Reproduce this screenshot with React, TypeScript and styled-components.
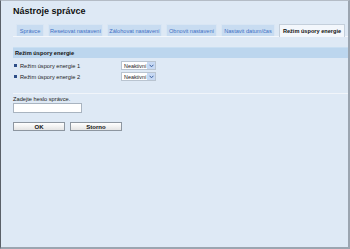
import React from "react";
import styled, { createGlobalStyle } from "styled-components";

const Global = createGlobalStyle`
  html, body { margin: 0; padding: 0; background: #dfe9f5; }
  body { font-family: "Liberation Sans", Arial, sans-serif; }
`;

const Frame = styled.div`
  box-sizing: border-box;
  width: 350px;
  height: 249px;
  background: #dee9f5;
  border-top: 1px solid #b4bcc6;
  border-left: 1px solid #5a6068;
  border-right: 2px solid #9ba5b0;
  border-bottom: 2px solid #9ba5b0;
  padding: 4px 0 0 12px;
  display: flex;
  flex-direction: column;
`;

const Title = styled.h1`
  margin: 0;
  font-size: 9px;
  line-height: 12px;
  font-weight: bold;
  color: #111;
`;

const TabBar = styled.div`
  margin-top: 7px;
  display: flex;
  gap: 4px;
  padding-left: 3px;
  border-bottom: 1px solid #f3f7fc;
  height: 12px;
`;

const Tab = styled.div<{ $w: number; $active?: boolean }>`
  box-sizing: border-box;
  width: ${(p) => p.$w}px;
  height: ${(p) => (p.$active ? 13 : 12)}px;
  display: flex;
  align-items: center;
  justify-content: center;
  font-size: 5.6px;
  white-space: nowrap;
  font-weight: ${(p) => (p.$active ? "bold" : "normal")};
  color: ${(p) => (p.$active ? "#111" : "#3f6fc4")};
  background: ${(p) => (p.$active ? "#f3f7fc" : "#c8dcf1")};
  border: 1px solid ${(p) => (p.$active ? "#c4cfdb" : "#d9e6f4")};
  border-bottom: none;
`;

const SectionBar = styled.div`
  margin-top: 10px;
  height: 11px;
  background: #bcd6ee;
  border-top: 1px solid #c9dff2;
  box-sizing: border-box;
  display: flex;
  align-items: center;
  padding-left: 2px;
  font-size: 5.7px;
  font-weight: bold;
  color: #111;
`;

const Rows = styled.div`
  margin-top: 2px;
  display: flex;
  flex-direction: column;
`;

const Row = styled.div`
  height: 11px;
  display: grid;
  grid-template-columns: 107px auto;
  align-items: center;
  padding-left: 1px;
`;

const Label = styled.div`
  display: flex;
  align-items: center;
  gap: 3px;
  font-size: 5.7px;
  color: #222;
  white-space: nowrap;
`;

const Bullet = styled.span`
  width: 3px;
  height: 3px;
  background: #2d4d86;
`;

const Select = styled.div`
  box-sizing: border-box;
  width: 35px;
  height: 9px;
  display: flex;
  align-items: center;
  background: #fff;
  border: 1px solid #b9c4d0;
  font-size: 5.4px;
  color: #222;
`;

const SelectText = styled.span`
  flex: 1;
  padding-left: 2px;
`;

const Arrow = styled.span`
  width: 8px;
  height: 7px;
  background: #c7d9f3;
  display: flex;
  align-items: center;
  justify-content: center;
`;

const Divider = styled.div`
  margin-top: 11px;
  height: 1px;
  background: #f1f5fa;
`;

const Field = styled.div`
  margin-top: 2px;
  display: flex;
  flex-direction: column;
  gap: 1px;
  font-size: 5.7px;
  color: #222;
`;

const Input = styled.div`
  box-sizing: border-box;
  width: 69px;
  height: 10px;
  background: #fff;
  border: 1px solid #a9b4c0;
`;

const Buttons = styled.div`
  margin-top: 9px;
  display: flex;
  gap: 5px;
`;

const Button = styled.div`
  box-sizing: border-box;
  width: 52px;
  height: 9px;
  display: flex;
  align-items: center;
  justify-content: center;
  background: linear-gradient(#ffffff, #e4e4e4);
  border: 1px solid #8d96a0;
  font-size: 6px;
  font-weight: bold;
  color: #111;
`;

const tabs: [string, number][] = [
  ["Správce", 28],
  ["Resetovat nastavení", 55],
  ["Zálohovat nastavení", 55],
  ["Obnovit nastavení", 51],
  ["Nastavit datum/čas", 54],
];

const Chevron = () => (
  <svg width="5" height="4" viewBox="0 0 5 4">
    <path d="M0.6 0.8 L2.5 2.8 L4.4 0.8" stroke="#3a5f9e" strokeWidth="1" fill="none" />
  </svg>
);

export default function App() {
  return (
    <>
      <Global />
      <Frame>
        <Title>Nástroje správce</Title>
        <TabBar>
          {tabs.map(([t, w]) => (
            <Tab key={t} $w={w}>
              {t}
            </Tab>
          ))}
          <Tab $w={66} $active>
            Režim úspory energie
          </Tab>
        </TabBar>
        <SectionBar>Režim úspory energie</SectionBar>
        <Rows>
          {["Režim úspory energie 1", "Režim úspory energie 2"].map((l) => (
            <Row key={l}>
              <Label>
                <Bullet />
                {l}
              </Label>
              <Select>
                <SelectText>Neaktivní</SelectText>
                <Arrow>
                  <Chevron />
                </Arrow>
              </Select>
            </Row>
          ))}
        </Rows>
        <Divider />
        <Field>
          Zadejte heslo správce.
          <Input />
        </Field>
        <Buttons>
          <Button>OK</Button>
          <Button>Storno</Button>
        </Buttons>
      </Frame>
    </>
  );
}
